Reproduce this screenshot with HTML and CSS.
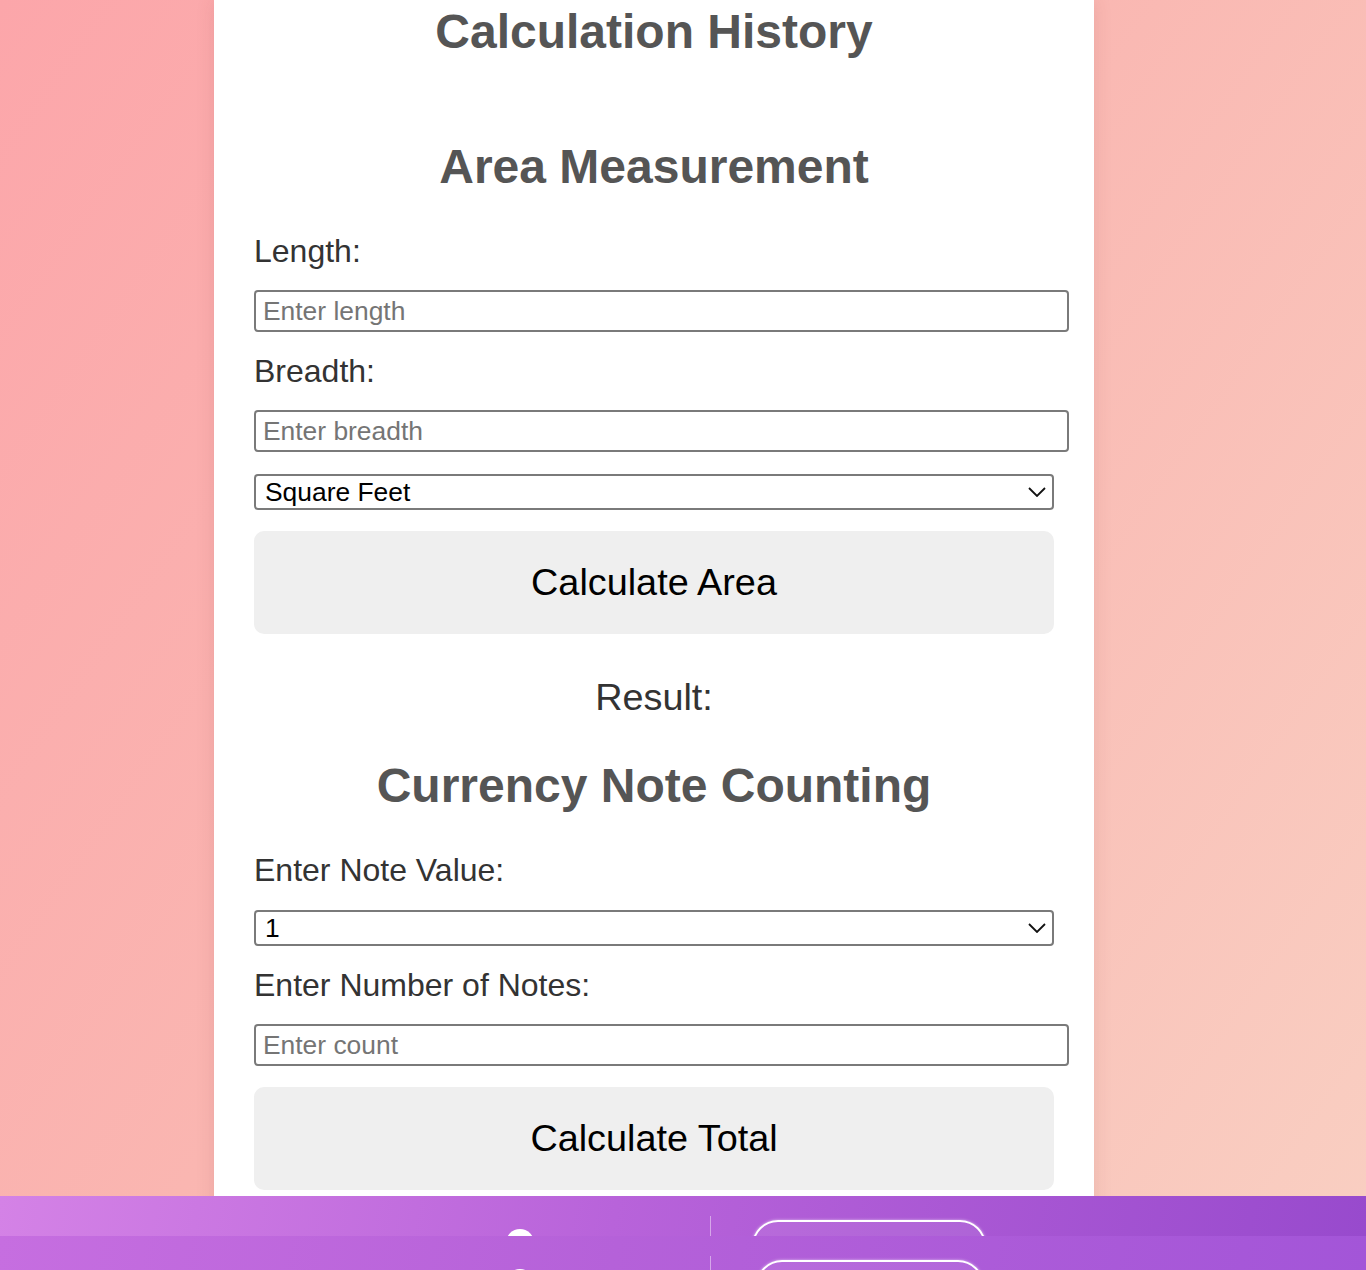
FILE: index.html
```html
<!DOCTYPE html>
<html lang="en">
<head>
<meta charset="utf-8">
<title>Calculators</title>
<link rel="stylesheet" href="styles.css">
</head>
<body>
<main class="card">
  <section class="history">
    <h2 class="heading">Calculation History</h2>
    <ul class="history-list"></ul>
  </section>

  <section class="calc">
    <h2 class="heading">Area Measurement</h2>
    <label class="field-label" for="length">Length:</label>
    <input class="text-input" id="length" type="number" placeholder="Enter length">
    <label class="field-label" for="breadth">Breadth:</label>
    <input class="text-input" id="breadth" type="number" placeholder="Enter breadth">
    <div class="select-wrap">
      <select class="select">
        <option>Square Feet</option>
        <option>Square Meters</option>
      </select>
      <svg class="chevron" width="18" height="10" viewBox="0 0 18 10"><path d="M1 1 L9 9 L17 1" fill="none" stroke="#111" stroke-width="1.8"/></svg>
    </div>
    <button class="action">Calculate Area</button>
    <p class="result">Result:</p>
  </section>

  <section class="calc">
    <h2 class="heading">Currency Note Counting</h2>
    <label class="field-label" for="note">Enter Note Value:</label>
    <div class="select-wrap">
      <select class="select" id="note">
        <option>1</option>
        <option>2</option>
        <option>5</option>
        <option>10</option>
      </select>
      <svg class="chevron" width="18" height="10" viewBox="0 0 18 10"><path d="M1 1 L9 9 L17 1" fill="none" stroke="#111" stroke-width="1.8"/></svg>
    </div>
    <label class="field-label" for="count">Enter Number of Notes:</label>
    <input class="text-input" id="count" type="number" placeholder="Enter count">
    <button class="action">Calculate Total</button>
  </section>
</main>

<footer class="footer">
  <div class="footer-row row-a">
    <span class="footer-icon"></span>
    <span class="footer-divider"></span>
    <span class="footer-btn"></span>
  </div>
  <div class="footer-row row-b">
    <span class="footer-icon"></span>
    <span class="footer-divider"></span>
    <span class="footer-btn"></span>
  </div>
</footer>
</body>
</html>
```

FILE: styles.css
```css
html, body {
  margin: 0;
  padding: 0;
}

body {
  min-height: 1270px;
  font-family: "Liberation Sans", Arial, sans-serif;
  background: linear-gradient(125deg, #fca6aa 0%, #fab6b1 45%, #f9cfc2 100%);
  background-attachment: fixed;
}

.card {
  width: 800px;
  margin-left: 214px;
  padding: 4px 40px 120px;
  background: #fff;
  box-shadow: 0 0 18px rgba(120, 40, 40, 0.12);
  display: flex;
  flex-direction: column;
}

.heading {
  margin: 0;
  font-size: 48px;
  line-height: 56px;
  font-weight: bold;
  color: #555;
  text-align: center;
}

.history-list {
  margin: 0;
  padding: 0;
  height: 79px;
  list-style: none;
}

.calc {
  display: flex;
  flex-direction: column;
}

.calc .heading {
  margin-bottom: 38px;
}

.field-label {
  display: block;
  font-size: 32px;
  line-height: 37px;
  color: #333;
  margin-bottom: 20px;
}

.text-input {
  width: 100%;
  box-sizing: content-box;
  height: 30px;
  padding: 4px 4px 4px 7px;
  border: 2px solid #7a7a7a;
  border-radius: 4px;
  font-family: "Liberation Sans", Arial, sans-serif;
  font-size: 26.4px;
  color: #222;
  background: #fff;
  margin: 0 0 21px;
  outline: none;
}

.text-input::placeholder {
  color: #757575;
}

.select-wrap {
  position: relative;
  margin: 1px 0 21px;
}

.select {
  -webkit-appearance: none;
  appearance: none;
  display: block;
  width: 100%;
  height: 36px;
  box-sizing: border-box;
  padding: 0 40px 0 9px;
  border: 2px solid #7a7a7a;
  border-radius: 4px;
  background: #fff;
  font-family: "Liberation Sans", Arial, sans-serif;
  font-size: 26.4px;
  color: #000;
}

.chevron {
  position: absolute;
  right: 8px;
  top: 13px;
  pointer-events: none;
}

.action {
  display: block;
  width: 100%;
  height: 103px;
  margin: 0 0 20px;
  border: none;
  border-radius: 10px;
  background: #efefef;
  font-family: "Liberation Sans", Arial, sans-serif;
  font-size: 37.8px;
  color: #000;
}

.result {
  margin: 21px 0 39px;
  font-size: 37.8px;
  line-height: 44px;
  color: #333;
  text-align: center;
}

.footer {
  position: fixed;
  left: 0;
  right: 0;
  bottom: 0;
  height: 74px;
  overflow: hidden;
}

.footer-row {
  height: 40px;
  overflow: hidden;
  display: flex;
  align-items: flex-start;
  padding-left: 506px;
}

.row-a {
  background: linear-gradient(100deg, #d482e6 0%, #b863da 45%, #984acd 100%);
}

.row-b {
  background: linear-gradient(100deg, #c66ee0 0%, #b561d9 45%, #a355d8 100%);
}

.footer-icon {
  width: 28px;
  height: 28px;
  margin-top: 33px;
  border-radius: 50%;
  background: #fff;
}

.footer-divider {
  width: 1px;
  height: 40px;
  margin: 20px 0 0 176px;
  background: rgba(255, 255, 255, 0.45);
}

.footer-btn {
  width: 230px;
  height: 48px;
  margin: 24px 0 0 41px;
  border: 2px solid #fff;
  border-radius: 26px;
  background: rgba(255, 255, 255, 0.08);
  box-shadow: 0 0 3px rgba(255, 255, 255, 0.6);
}

.row-b .footer-btn {
  width: 224px;
  margin-left: 45px;
}
```
